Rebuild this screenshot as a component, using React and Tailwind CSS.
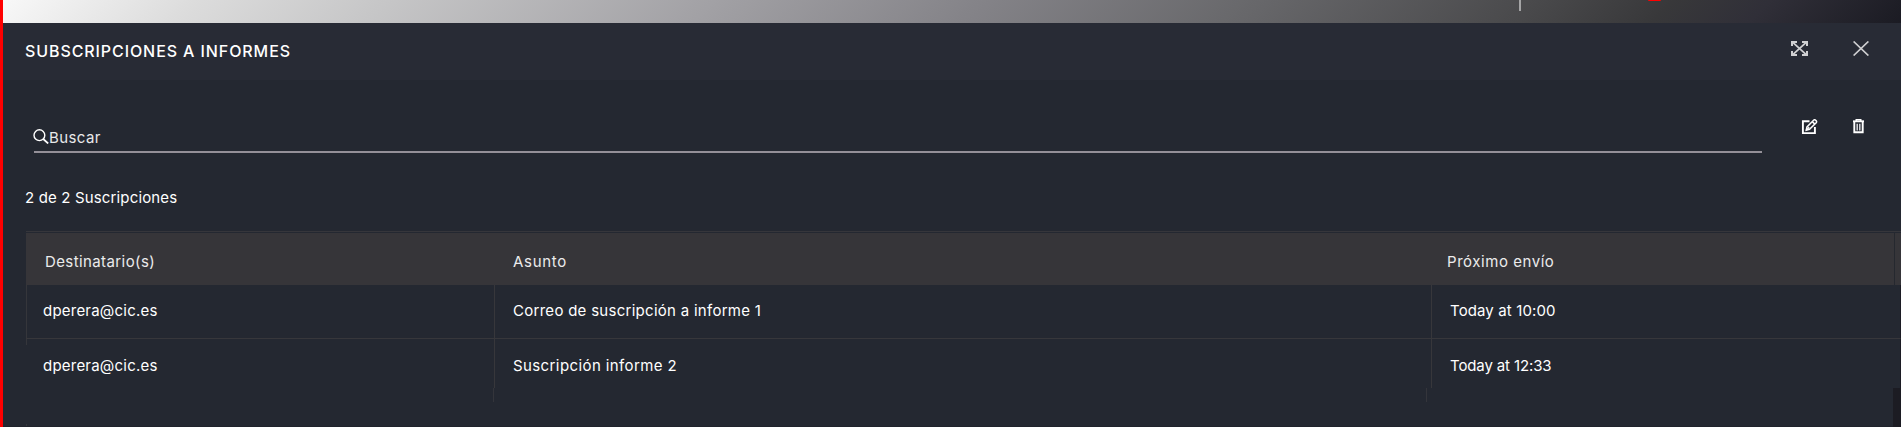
const ROWS = [
  {
    to: "dperera@cic.es",
    subject: "Correo de suscripción a informe 1",
    subjectClass: "tracking-[0.28px]",
    next: "Today at 10:00",
    nextClass: "tracking-[0.12px]",
  },
  {
    to: "dperera@cic.es",
    subject: "Suscripción informe 2",
    subjectClass: "tracking-[0.4px]",
    next: "Today at 12:33",
    nextClass: "tracking-[-0.12px]",
  },
];

function ExpandIcon() {
  return (
    <svg className="h-[15px] w-[17px]" viewBox="0 0 17 15" fill="none" stroke="#d0d0d2" strokeWidth="2">
      <path d="M1 5V1h5M11 1h5v4M1 10v4h5M11 14h5v-4" />
      <path d="M1.5 1.2l14 12.6M15.5 1.2l-14 12.6" strokeWidth="1.8" />
    </svg>
  );
}

function CloseIcon() {
  return (
    <svg className="h-[15px] w-4" viewBox="0 0 16 15" fill="none" stroke="#cfcfd1" strokeWidth="1.7">
      <path d="M.6.5l14.8 14M15.4.5L.6 14.5" />
    </svg>
  );
}

function SearchIcon() {
  return (
    <svg className="h-[15px] w-4" viewBox="0 0 16 15" fill="none" stroke="#fff" strokeWidth="1.4">
      <circle cx="6.4" cy="6.2" r="5.4" />
      <path d="M10.2 10l5 4.5" strokeWidth="1.7" />
    </svg>
  );
}

function EditIcon() {
  return (
    <svg className="h-4 w-[17px]" viewBox="0 0 17 16" fill="none" stroke="#fff">
      <path d="M8.5 2.2H1.9v11.9h12V8" strokeWidth="1.9" />
      <path d="M5.2 11.3l.8-3.4 6.6-6.7c.6-.6 1.4-.5 2 0l.6.6c.5.6.5 1.3 0 1.9L8.5 10.4z" strokeWidth="1.5" />
      <path d="M11.3 2.6l2.5 2.5M5.2 11.3l3-3" strokeWidth="1.5" />
    </svg>
  );
}

function TrashIcon() {
  return (
    <svg className="h-[15px] w-[11px]" viewBox="0 0 11 15" fill="none" stroke="#fff">
      <path d="M0 2.3h11" strokeWidth="1.9" />
      <path d="M3.2 2V.8h4.6V2" strokeWidth="1.4" />
      <path d="M1.3 3v10.2h8.4V3" strokeWidth="1.9" />
      <path d="M4.2 4.8v6.8M6.8 4.8v6.8" strokeWidth="1.4" stroke="#e4e4e8" />
    </svg>
  );
}

export default function App() {
  return (
    <div className="flex h-[427px] w-[1901px] overflow-hidden bg-[#242831] font-['Inter',sans-serif] text-[15px] leading-5 text-white">
      <div className="w-[3px] shrink-0 bg-[#ff0000]" />
      <div className="flex min-w-0 flex-1 flex-col">
        <div className="flex h-[23px] shrink-0 items-start bg-[linear-gradient(135deg,#f8f8f8_0%,#dcdcdc_10%,#c6c6c7_20%,#a2a1a5_37%,#848388_51%,#68686b_65%,#49494b_80%,#38383a_87%,#302f38_92%,#1b1b23_100%)]">
          <div className="ml-[1516px] h-[11px] w-[2px] bg-[#a5a5a6]" />
          <div className="ml-[127px] h-px w-[13px] rounded-b-sm bg-[#ff0000]" />
        </div>

        <header className="flex h-[57px] shrink-0 items-start justify-between bg-[#282b35] pr-[32px] pl-[22px]">
          <h1 className="mt-[18px] text-base leading-5 font-medium tracking-[0.91px]">SUBSCRIPCIONES A INFORMES</h1>
          <div className="mt-[18px] flex items-center gap-[45px]">
            <ExpandIcon />
            <CloseIcon />
          </div>
        </header>

        <div className="flex h-[73px] shrink-0 items-start pl-[31px]">
          <div className="flex h-[73px] w-[1728px] shrink-0 items-end border-b-2 border-[#949098] pb-[3px]">
            <div className="-ml-px flex items-start">
              <span className="pt-[1px]">
                <SearchIcon />
              </span>
              <span className="tracking-[0.4px] text-[#e9e9ea]">Buscar</span>
            </div>
          </div>
          <div className="ml-[39px] flex items-start gap-[35px] pt-[39px]">
            <EditIcon />
            <TrashIcon />
          </div>
        </div>

        <p className="mt-[35px] h-[43px] shrink-0 pl-[22px] tracking-[0.15px]">2 de 2 Suscripciones</p>

        <div className="ml-[23px] flex shrink-0 flex-col">
          <div className="h-px bg-[#36363b]" />
          <div className="mt-px flex h-[52px] items-start bg-[#363539] pt-[19px] text-[#ebebec]">
            <div className="w-[468px] pl-[19px] tracking-[0.4px]">Destinatario(s)</div>
            <div className="w-[937px] pl-[19px] tracking-[0.7px]">Asunto</div>
            <div className="w-[463px] pl-[16px] tracking-[0.55px]">Próximo envío</div>
            <div className="-mt-[19px] h-[52px] w-px bg-[#25282f]" />
          </div>
          {ROWS.map((row, i) => (
            <div
              key={row.subject}
              className={
                i === 0
                  ? "flex h-[54px] border-r border-b border-r-[#1c1c24] border-b-[#37373b]"
                  : "flex h-[49px] border-r border-r-[#1c1c24]"
              }
            >
              <div className="flex w-[468px] items-start">
                <div className={i === 0 ? "h-[53px] w-px bg-[#35363b]" : "h-[6px] w-px bg-[#35363b]"} />
                <span className={i === 0 ? "pt-4 pl-4 tracking-[0.22px]" : "pt-[17px] pl-4 tracking-[0.22px]"}>{row.to}</span>
              </div>
              <div className="flex w-[937px] border-l border-[#37373b]">
                <span className={(i === 0 ? "pt-4 pl-[18px] " : "pt-[17px] pl-[18px] ") + row.subjectClass}>{row.subject}</span>
              </div>
              <div className="flex flex-1 border-l border-[#37373b]">
                <span className={(i === 0 ? "pt-4 pl-[18px] " : "pt-[17px] pl-[18px] ") + row.nextClass}>{row.next}</span>
              </div>
            </div>
          ))}
        </div>

        <div className="flex min-h-0 flex-1 items-stretch">
          <div className="flex flex-1 flex-col justify-between">
            <div className="flex h-[14px]">
              <div className="ml-[490px] w-px bg-[#34353b]" />
              <div className="ml-[932px] w-px bg-[#34353b]" />
            </div>
            <div className="flex h-[3px] border-b border-[#20232c]">
              <div className="ml-[23px] w-px bg-[#34353b]" />
            </div>
          </div>
          <div className="w-2 bg-[#1c1c23]" />
        </div>
      </div>
    </div>
  );
}
